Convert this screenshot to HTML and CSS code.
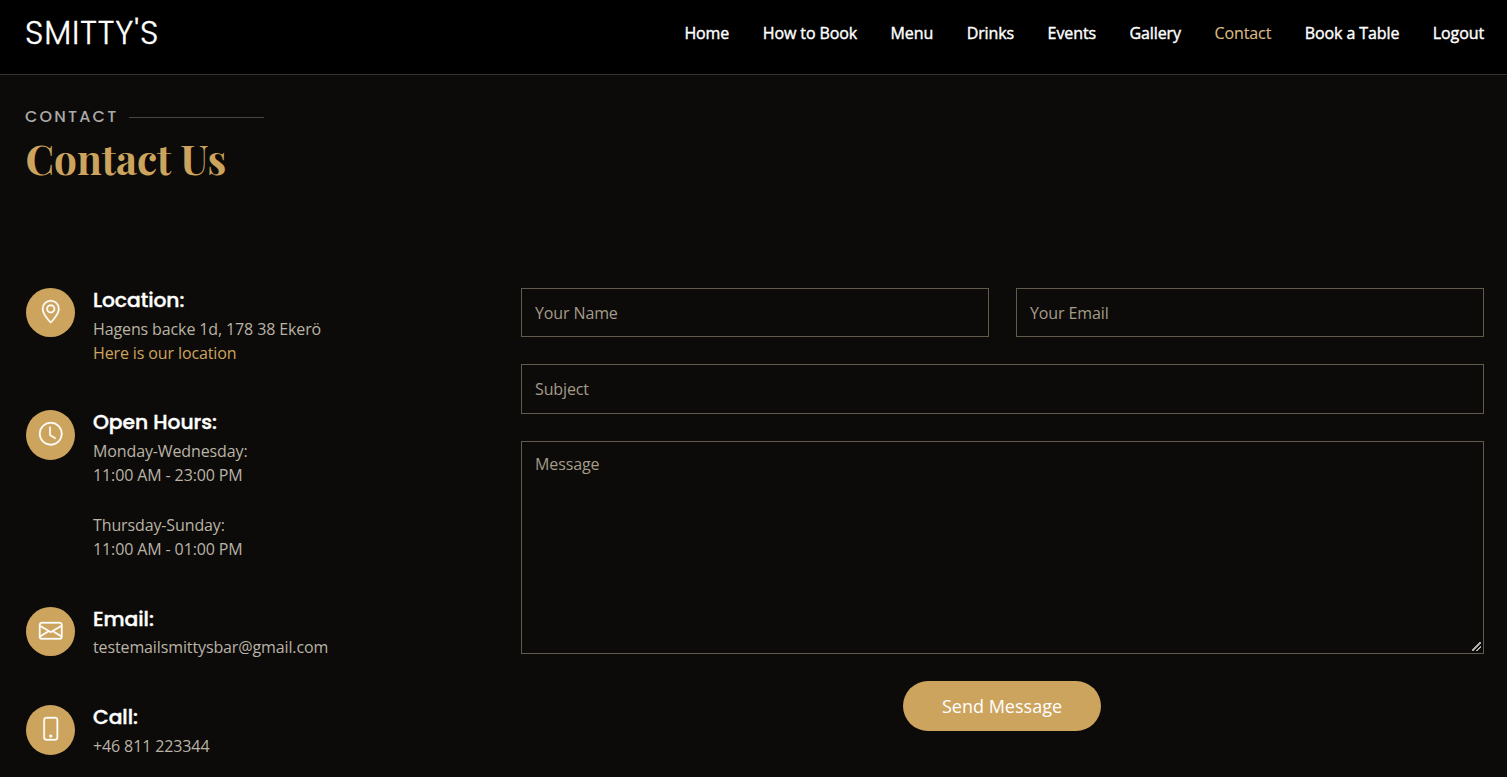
FILE: index.html
```html
<!DOCTYPE html>
<html lang="en">
<head>
<meta charset="utf-8">
<title>Smitty's - Contact</title>
<link rel="stylesheet" href="styles.css">
</head>
<body>
<header class="header">
  <a class="logo">SMITTY'S</a>
  <nav class="nav">
    <a>Home</a><a>How to Book</a><a>Menu</a><a>Drinks</a><a>Events</a><a>Gallery</a><a class="active">Contact</a><a>Book a Table</a><a>Logout</a>
  </nav>
</header>
<main class="contact">
  <div class="section-title">
    <h2><span>CONTACT</span></h2>
    <p>Contact Us</p>
  </div>
  <div class="columns">
    <div class="info">
      <section class="item location">
        <div class="icon"><svg viewBox="0 0 16 16"><path d="M12.166 8.94c-.524 1.062-1.234 2.12-1.96 3.07A31.493 31.493 0 0 1 8 14.58a31.481 31.481 0 0 1-2.206-2.57c-.726-.95-1.436-2.008-1.96-3.07C3.304 7.867 3 6.862 3 6a5 5 0 0 1 10 0c0 .862-.305 1.867-.834 2.94zM8 16s6-5.686 6-10A6 6 0 0 0 2 6c0 4.314 6 10 6 10z"/><path d="M8 8a2 2 0 1 1 0-4 2 2 0 0 1 0 4zm0 1a3 3 0 1 0 0-6 3 3 0 0 0 0 6z"/></svg></div>
        <div class="text"><h4>Location:</h4><p>Hagens backe 1d, 178 38 Ekerö<br><a>Here is our location</a></p></div>
      </section>
      <section class="item hours">
        <div class="icon"><svg viewBox="0 0 16 16"><path d="M8 3.5a.5.5 0 0 0-1 0V9a.5.5 0 0 0 .252.434l3.5 2a.5.5 0 0 0 .496-.868L8 8.71V3.5z"/><path d="M8 16A8 8 0 1 0 8 0a8 8 0 0 0 0 16zm7-8A7 7 0 1 1 1 8a7 7 0 0 1 14 0z"/></svg></div>
        <div class="text"><h4>Open Hours:</h4><p>Monday-Wednesday:<br>11:00 AM - 23:00 PM</p><p class="second">Thursday-Sunday:<br>11:00 AM - 01:00 PM</p></div>
      </section>
      <section class="item email">
        <div class="icon"><svg viewBox="0 0 16 16"><path d="M0 4a2 2 0 0 1 2-2h12a2 2 0 0 1 2 2v8a2 2 0 0 1-2 2H2a2 2 0 0 1-2-2V4zm2-1a1 1 0 0 0-1 1v.217l7 4.2 7-4.2V4a1 1 0 0 0-1-1H2zm13 2.383-4.758 2.855L15 11.114v-5.73zm-.034 6.878L9.271 8.82 8 9.583 6.728 8.82l-5.694 3.44A1 1 0 0 0 2 13h12a1 1 0 0 0 .966-.739zM1 11.114l4.758-2.876L1 5.383v5.73z"/></svg></div>
        <div class="text"><h4>Email:</h4><p>testemailsmittysbar@gmail.com</p></div>
      </section>
      <section class="item phone">
        <div class="icon"><svg viewBox="0 0 16 16"><path d="M11 1a1 1 0 0 1 1 1v12a1 1 0 0 1-1 1H5a1 1 0 0 1-1-1V2a1 1 0 0 1 1-1h6zM5 0a2 2 0 0 0-2 2v12a2 2 0 0 0 2 2h6a2 2 0 0 0 2-2V2a2 2 0 0 0-2-2H5z"/><path d="M8 14a1 1 0 1 0 0-2 1 1 0 0 0 0 2z"/></svg></div>
        <div class="text"><h4>Call:</h4><p>+46 811 223344</p></div>
      </section>
    </div>
    <form class="form">
      <input type="text" placeholder="Your Name">
      <input type="email" placeholder="Your Email">
      <input class="wide" type="text" placeholder="Subject">
      <textarea class="wide" placeholder="Message"></textarea>
      <button class="wide" type="button">Send Message</button>
    </form>
  </div>
</main>
</body>
</html>
```
FILE: styles.css
```css
* { box-sizing: border-box; }
html, body { margin: 0; height: 100%; overflow: hidden; }
body { background: #0c0b09; color: #fff; font-family: "Open Sans", sans-serif; font-size: 16px; }
h2, h4, p { margin: 0; }
.header { height: 75px; background: #000; border-bottom: 1px solid #343330; display: flex; justify-content: space-between; padding: 0 23px 0 25px; }
.logo { font: 300 32px/66px Poppins, "Inter", sans-serif; letter-spacing: 0.9px; -webkit-text-stroke: .3px; }
.nav { display: flex; gap: 33.5px; font-weight: 400; line-height: 66px; letter-spacing: -0.1px; -webkit-text-stroke: .4px; }
.nav .active { color: #d9ba85; -webkit-text-stroke: .15px; }
.contact { padding: 32px 23px 0 26px; }
.section-title { height: 181px; }
.section-title h2 { display: flex; align-items: center; gap: 11px; margin-left: -1px; font: 500 16px/20px Poppins, "Inter", sans-serif; letter-spacing: 2.2px; color: #aaa; }
.section-title h2::after { content: ""; width: 135px; height: 1px; background: #464541; }
.section-title p { font: 700 40.5px/52px "Playfair Display", "Liberation Serif", serif; color: #cda45e; margin: 5px 0 0 -0.5px; }
.columns { display: flex; }
.info { width: 495px; }
.item { display: flex; gap: 18px; }
.location { height: 122px; }
.hours { height: 197px; }
.email { height: 98px; }
.icon { width: 49px; height: 49px; border-radius: 50%; background: #cda45e; display: grid; place-items: center; padding: 0 0 2px; }
.hours .icon, .phone .icon { height: 50px; }
.icon svg { width: 23.5px; height: 23.5px; fill: #fff; stroke: #fff; stroke-width: .2; overflow: visible; }
.text h4 { font: 500 20.3px/24px Poppins, "Inter", sans-serif; letter-spacing: -0.05px; -webkit-text-stroke: .4px; margin-bottom: 5px; }
.email h4 { margin-bottom: 4px; }
.text p { line-height: 24px; color: #bab3a6; letter-spacing: -0.12px; }
.text p a { color: #cda45e; }
.text .second { margin-top: 26px; }
.form { flex: 1; display: grid; grid-template-columns: 1fr 1fr; grid-template-rows: 49px 50px 213px 50px; gap: 27px; }
.wide { grid-column: 1 / -1; }
.form input, .form textarea { min-width: 0; margin: 0; background: #0c0b09; border: 1px solid #625b4b; border-radius: 0; color: #fff; padding: 0 13px; font: 16px/24px "Open Sans", sans-serif; letter-spacing: -0.12px; }
.form textarea { padding-top: 10px; }
.form textarea::-webkit-resizer { background: linear-gradient(135deg, transparent 42%, #aaa 42% 56%, transparent 56% 70%, #aaa 70% 82%, transparent 82%) 4px 4px / 9px 9px no-repeat; }
.form ::placeholder { color: #a49b89; opacity: 1; }
.form button { justify-self: center; width: 198px; margin-right: 1px; border: 0; border-radius: 50px; background: #cda45e; color: #fff; font: 18px "Open Sans", sans-serif; padding: 0; }
```
